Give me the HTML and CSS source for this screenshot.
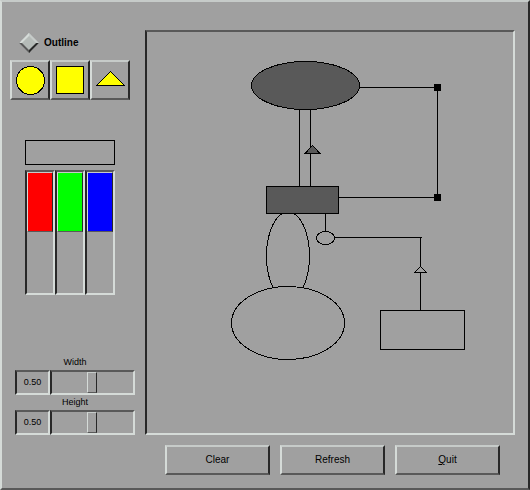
FILE: index.html
```html
<!DOCTYPE html>
<html lang="en">
<head>
<meta charset="utf-8">
<title>Shape editor</title>
<link rel="stylesheet" href="styles.css">
</head>
<body>
<main class="window">
  <aside class="sidebar">
    <label class="toggle"><input class="toggle-box" type="checkbox">Outline</label>
    <div class="tools">
      <button class="tool" type="button" aria-label="Circle">
        <svg class="icon" viewBox="0 0 36 36"><circle cx="18.5" cy="18.5" r="14"/></svg>
      </button>
      <button class="tool" type="button" aria-label="Rectangle">
        <svg class="icon" viewBox="0 0 36 36"><rect x="4.5" y="4.5" width="27" height="27"/></svg>
      </button>
      <button class="tool" type="button" aria-label="Triangle">
        <svg class="icon" viewBox="0 0 36 36"><path d="M4.5 23.5 18.5 9.5 32.5 23.5Z"/></svg>
      </button>
    </div>
    <div class="colors">
      <div class="preview"></div>
      <div class="channels">
        <input class="channel red" type="range" min="0" max="255" value="0" aria-label="Red">
        <input class="channel green" type="range" min="0" max="255" value="0" aria-label="Green">
        <input class="channel blue" type="range" min="0" max="255" value="0" aria-label="Blue">
      </div>
    </div>
    <div class="sizes">
      <div class="size">
        <label class="size-label" for="width">Width</label>
        <div class="size-row">
          <output class="size-value" for="width">0.50</output>
          <input class="slider" id="width" type="range" min="0" max="1" step="0.01" value="0.49">
        </div>
      </div>
      <div class="size">
        <label class="size-label" for="height">Height</label>
        <div class="size-row">
          <output class="size-value" for="height">0.50</output>
          <input class="slider" id="height" type="range" min="0" max="1" step="0.01" value="0.49">
        </div>
      </div>
    </div>
  </aside>
  <section class="work">
    <div class="canvas">
      <svg class="drawing" viewBox="147 32 366 401" preserveAspectRatio="xMinYMin meet">
        <path class="line" d="M299.5 109V186M310.5 109V186"/>
        <path class="line" d="M359 87.5H437.5V197.5H338"/>
        <path class="line" d="M325.5 213V232M334 237.5H422M420.5 237V311"/>
        <ellipse class="dark" cx="305.5" cy="85.5" rx="54" ry="24"/>
        <path class="dark" d="M305 153.5 312.5 145.5 320 153.5Z"/>
        <ellipse class="open" cx="288" cy="256" rx="21.5" ry="44"/>
        <rect class="dark" x="266.5" y="186.5" width="72" height="27"/>
        <ellipse class="open" cx="288" cy="323" rx="56.5" ry="36.5"/>
        <ellipse class="open" cx="325.5" cy="238" rx="9" ry="6.5"/>
        <path class="open" d="M414.5 272.5 420.5 266.5 426.5 272.5Z"/>
        <rect class="open" x="380.5" y="310.5" width="84" height="39"/>
        <rect class="handle" x="434" y="84" width="7" height="7"/>
        <rect class="handle" x="434" y="194" width="7" height="7"/>
      </svg>
    </div>
    <div class="actions">
      <button class="action" type="button">Clear</button>
      <button class="action" type="button">Refresh</button>
      <button class="action" type="button" accesskey="q"><span class="key">Q</span>uit</button>
    </div>
  </section>
</main>
</body>
</html>
```
FILE: styles.css
```css
:root {
  --face: #a0a0a0;
  --light-top: #c6cbc9;
  --light: #d5dbd8;
  --shade: #595959;
  --dark: #282828;
  --raised: var(--light-top) var(--dark) var(--shade) var(--light);
  --sunken: var(--shade) var(--light) var(--light) var(--dark);
}

* {
  box-sizing: border-box;
}

body {
  margin: 0;
  background: var(--face);
  color: #000;
  font: 10px/14px "Liberation Sans", sans-serif;
}

input,
button {
  margin: 0;
  padding: 0;
  appearance: none;
  background: var(--face);
  color: inherit;
  font: inherit;
  border-radius: 0;
}

.window {
  display: grid;
  grid-template-columns: 135px 1fr;
  min-height: 100vh;
  padding: 28px 13px 13px 8px;
  border: 2px solid;
  border-color: var(--raised);
}

.toggle {
  display: flex;
  align-items: center;
  gap: 8px;
  height: 26px;
  padding-left: 12px;
  font-weight: bold;
}

.toggle-box {
  width: 14px;
  height: 14px;
  border: 2px solid;
  border-color: var(--light-top) var(--dark) var(--shade) var(--light);
  background: #b5bbb8;
  transform: rotate(45deg);
}

.tools {
  display: flex;
  margin-top: 4px;
}

.tool {
  width: 40px;
  height: 40px;
  border: 2px solid;
  border-color: var(--raised);
}

.icon {
  display: block;
  width: 36px;
  height: 36px;
  fill: #ff0;
  stroke: #000;
  shape-rendering: crispEdges;
}

.colors {
  width: 90px;
  margin: 40px 0 0 15px;
}

.preview {
  height: 25px;
  margin-bottom: 5px;
  border: 1px solid #000;
}

.channels {
  display: flex;
}

.channel {
  width: 30px;
  height: 125px;
  border: 2px solid;
  border-color: var(--sunken);
  writing-mode: vertical-lr;
}

.channel::-webkit-slider-thumb {
  appearance: none;
  box-sizing: border-box;
  width: 26px;
  height: 60px;
  border: 1px solid;
  border-color: var(--raised);
  background: var(--channel);
}

.red {
  --channel: #f00;
}

.green {
  --channel: #0f0;
}

.blue {
  --channel: #00f;
}

.sizes {
  width: 120px;
  margin: 60px 0 0 5px;
  font-size: 9px;
  line-height: 15px;
}

.size-label {
  display: block;
  text-align: center;
}

.size-row {
  display: flex;
  height: 25px;
}

.size-value {
  width: 35px;
  border: 2px solid;
  border-color: var(--sunken);
  line-height: 21px;
  text-align: center;
}

.slider {
  flex: 1;
  min-width: 0;
  border: 2px solid;
  border-color: var(--sunken);
}

.slider::-webkit-slider-thumb {
  appearance: none;
  box-sizing: border-box;
  width: 10px;
  height: 21px;
  border: 1px solid;
  border-color: var(--raised);
  background: var(--face);
}

.work {
  display: flex;
  flex-direction: column;
  gap: 10px;
}

.canvas {
  flex: 1;
  border: 2px solid;
  border-color: var(--sunken);
}

.drawing {
  display: block;
  width: 100%;
  stroke: #000;
  shape-rendering: crispEdges;
}

.line {
  fill: none;
}

.dark {
  fill: var(--shade);
}

.open {
  fill: var(--face);
}

.handle {
  fill: #000;
  stroke: none;
}

.actions {
  display: flex;
  gap: 10px;
  padding: 0 15px 0 20px;
}

.action {
  flex: 1;
  height: 30px;
  border: 2px solid;
  border-color: var(--raised);
}

.key {
  text-decoration: underline;
}
```
